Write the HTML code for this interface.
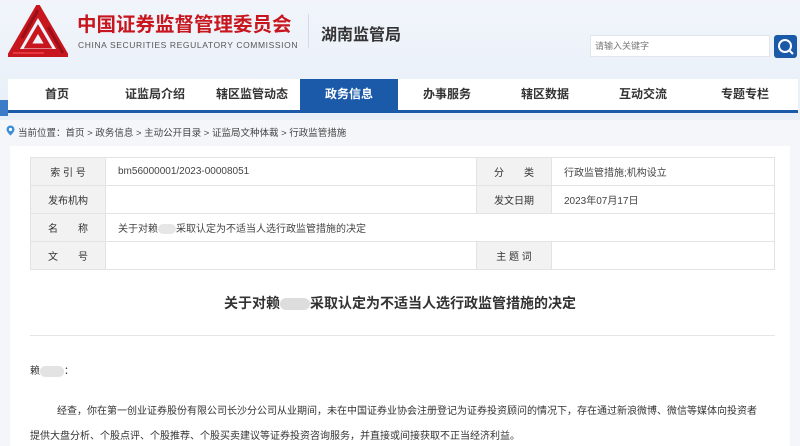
<!DOCTYPE html>
<html><head><meta charset="utf-8"><style>
*{margin:0;padding:0;box-sizing:border-box}
body{width:800px;height:445px;overflow:hidden;background:#f4f6f9;font-family:"Liberation Sans","Noto Sans CJK SC",sans-serif;position:relative;color:#333}
.hdr{position:absolute;left:0;top:0;width:800px;height:120px;background:linear-gradient(180deg,#f1f5fb,#e8eff8)}
.abs{position:absolute;white-space:nowrap}
.nav{position:absolute;left:8px;top:79px;width:790px;height:34px;background:#fff;border-bottom:3px solid #1a5aa8}
.nav span{position:absolute;top:0;height:31px;line-height:31px;font-size:12px;font-weight:bold;color:#333;text-align:center}
.card{position:absolute;left:10px;top:146px;width:780px;height:300px;background:#fff}
table{position:absolute;left:30px;top:157px;width:745px;border-collapse:collapse;font-size:10px;color:#444}
td{border:1px solid #e3e3e3;height:28px;padding-left:12px;vertical-align:middle}
td.l{background:#f2f2f2;text-align:center;padding:0;width:75px;color:#333}
</style></head><body>
<div class="hdr"></div>
<svg class="abs" style="left:8px;top:5px" width="60" height="54" viewBox="0 0 60 54">
<g fill="none" stroke-linejoin="miter">
<path d="M30 5 L55 48 L5 48 Z" stroke="#c8161e" stroke-width="8"/>
<path d="M30 24 L40 41 L20 41 Z" stroke="#c8161e" stroke-width="5"/>
<path d="M30 5 L14 33" stroke="#9a0f16" stroke-width="3"/>
<path d="M55 48 L40 22" stroke="#9a0f16" stroke-width="3"/>
<path d="M5 48 L36 48" stroke="#e8383f" stroke-width="2"/>
</g>
</svg>
<div class="abs" style="left:77px;top:8px;font-size:19.5px;font-weight:bold;color:#c8161e">中国证券监督管理委员会</div>
<div class="abs" style="left:78px;top:40px;font-size:8.5px;color:#555;letter-spacing:0.6px">CHINA SECURITIES REGULATORY COMMISSION</div>
<div class="abs" style="left:308px;top:14px;width:1px;height:34px;background:#d5dbe4"></div>
<div class="abs" style="left:321px;top:21px;font-size:16px;font-weight:bold;color:#333">湖南监管局</div>
<div class="abs" style="left:590px;top:35px;width:180px;height:22px;background:#fff;border:1px solid #e2e6ec;font-size:9px;color:#777;line-height:20px;padding-left:4px">请输入关键字</div>
<div class="abs" style="left:774px;top:35px;width:23px;height:23px;background:#1a5aa8;border-radius:3px"><svg width="23" height="23"><circle cx="11" cy="11" r="6" fill="none" stroke="#fff" stroke-width="2"/><line x1="15" y1="15" x2="19" y2="19" stroke="#fff" stroke-width="2"/></svg></div>
<div class="abs" style="left:0;top:100px;width:8px;height:16px;background:#3b7bc8"></div>
<div class="nav">
<span style="left:0;width:98px">首页</span>
<span style="left:98px;width:98px">证监局介绍</span>
<span style="left:196px;width:96px">辖区监管动态</span>
<span style="left:292px;width:98px;background:#1a5aa8;color:#fff">政务信息</span>
<span style="left:390px;width:98px">办事服务</span>
<span style="left:488px;width:98px">辖区数据</span>
<span style="left:586px;width:98px">互动交流</span>
<span style="left:684px;width:106px">专题专栏</span>
</div>
<svg class="abs" style="left:6px;top:125px" width="9" height="11"><path d="M4.5 0.5a4 4 0 0 1 4 4c0 2.5-4 6-4 6s-4-3.5-4-6a4 4 0 0 1 4-4z" fill="#3b8fd8"/><circle cx="4.5" cy="4.5" r="1.6" fill="#fff"/></svg>
<div class="abs" style="left:18px;top:125px;font-size:9.5px;color:#444">当前位置：首页 &gt; 政务信息 &gt; 主动公开目录 &gt; 证监局文种体裁 &gt; 行政监管措施</div>
<div class="card"></div>
<table>
<tr><td class="l">索 引 号</td><td style="width:371px">bm56000001/2023-00008051</td><td class="l">分　　类</td><td>行政监管措施;机构设立</td></tr>
<tr><td class="l">发布机构</td><td></td><td class="l">发文日期</td><td>2023年07月17日</td></tr>
<tr><td class="l">名　　称</td><td colspan="3">关于对赖<span style="display:inline-block;width:18px;height:10px;background:#e6e6e6;border-radius:5px;vertical-align:middle"></span>采取认定为不适当人选行政监管措施的决定</td></tr>
<tr><td class="l">文　　号</td><td></td><td class="l">主 题 词</td><td></td></tr>
</table>
<div class="abs" style="left:0;width:800px;top:293px;text-align:center;font-size:14px;font-weight:bold;color:#333">关于对赖<span style="display:inline-block;width:30px;height:12px;background:#ddd;border-radius:6px;vertical-align:middle"></span>采取认定为不适当人选行政监管措施的决定</div>
<div class="abs" style="left:30px;top:335px;width:745px;height:1px;background:#e5e5e5"></div>
<div class="abs" style="left:30px;top:362px;font-size:10px;color:#333">赖<span style="display:inline-block;width:24px;height:11px;background:#e3e3e3;border-radius:5px;vertical-align:middle"></span>：</div>
<div class="abs" style="left:57px;top:402px;font-size:10px;color:#333">经查，你在第一创业证券股份有限公司长沙分公司从业期间，未在中国证券业协会注册登记为证券投资顾问的情况下，存在通过新浪微博、微信等媒体向投资者</div>
<div class="abs" style="left:30px;top:427px;font-size:10px;color:#333">提供大盘分析、个股点评、个股推荐、个股买卖建议等证券投资咨询服务，并直接或间接获取不正当经济利益。</div>
</body></html>
